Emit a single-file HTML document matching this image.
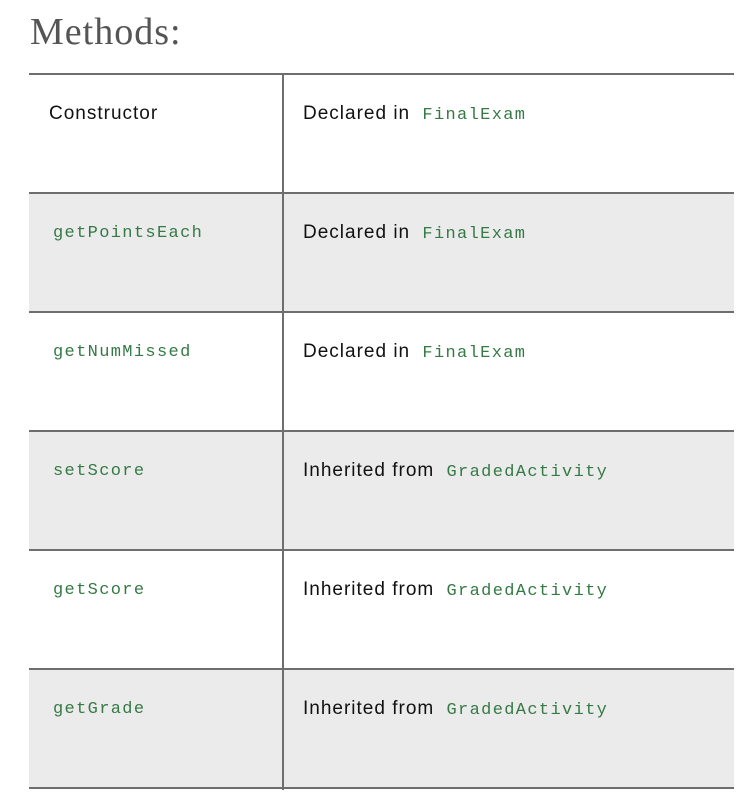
<!DOCTYPE html>
<html><head><style>
body{margin:0;width:748px;height:812px;background:#fff;position:relative;overflow:hidden}
h1{position:absolute;left:30px;top:10px;margin:0;font:normal 38px "Liberation Serif",serif;letter-spacing:1px;color:#555;line-height:44px}
.row{position:absolute;left:29px;width:705px;height:117px;border-top:2px solid #6e6e6e}
.g{background:#ebebeb}
.c1,.c2{position:absolute;top:28px;font:19px "Liberation Sans",sans-serif;letter-spacing:1px;color:#111;white-space:nowrap}
.c1{left:20px}.c2{left:274px}
.m{font:17px "Liberation Mono","Courier New",monospace;letter-spacing:1.35px;color:#357a45}
.c2 .m{margin-left:6px}
.c1.m{left:24px;top:30px}
.vl{position:absolute;left:282px;top:74px;width:2px;height:716px;background:#6e6e6e}
.bot{position:absolute;left:29px;top:787px;width:705px;height:2px;background:#6e6e6e}
</style></head><body>
<h1>Methods:</h1>
<div class="row" style="top:73px"><span class="c1">Constructor</span><span class="c2">Declared in <span class="m">FinalExam</span></span></div>
<div class="row g" style="top:192px"><span class="c1 m">getPointsEach</span><span class="c2">Declared in <span class="m">FinalExam</span></span></div>
<div class="row" style="top:311px"><span class="c1 m">getNumMissed</span><span class="c2">Declared in <span class="m">FinalExam</span></span></div>
<div class="row g" style="top:430px"><span class="c1 m">setScore</span><span class="c2">Inherited from <span class="m">GradedActivity</span></span></div>
<div class="row" style="top:549px"><span class="c1 m">getScore</span><span class="c2">Inherited from <span class="m">GradedActivity</span></span></div>
<div class="row g" style="top:668px"><span class="c1 m">getGrade</span><span class="c2">Inherited from <span class="m">GradedActivity</span></span></div>
<div class="vl"></div><div class="bot"></div>
</body></html>
